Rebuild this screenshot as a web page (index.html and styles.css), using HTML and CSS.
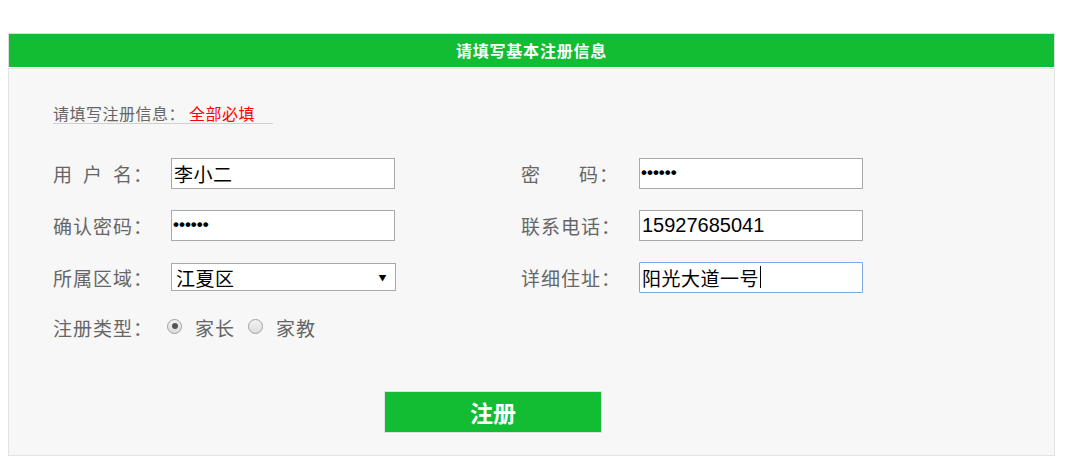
FILE: index.html
```html
<!DOCTYPE html>
<html lang="zh">
<head>
<meta charset="utf-8">
<title>注册</title>
<link rel="stylesheet" href="styles.css">
</head>
<body>
<div class="wrap">
  <div class="head">请填写基本注册信息</div>
  <div class="panel">
    <div class="title"><span class="t-gray">请填写注册信息<span class="colon">：</span></span><span class="t-red">全部必填</span></div>
    <div class="grid">
      <div class="field">
        <span class="label"><span class="wide">用</span><span class="wide">户</span>名<span class="colon">：</span></span>
        <div class="inp">李小二</div>
      </div>
      <div class="field">
        <span class="label"><span class="wider">密</span>码<span class="colon">：</span></span>
        <div class="inp dots">••••••</div>
      </div>
      <div class="field">
        <span class="label">确认密码<span class="colon">：</span></span>
        <div class="inp dots">••••••</div>
      </div>
      <div class="field">
        <span class="label">联系电话<span class="colon">：</span></span>
        <div class="inp num">15927685041</div>
      </div>
      <div class="field">
        <span class="label">所属区域<span class="colon">：</span></span>
        <div class="sel"><span>江夏区</span><span class="arrow">▼</span></div>
      </div>
      <div class="field">
        <span class="label">详细住址<span class="colon">：</span></span>
        <div class="inp focus">阳光大道一号<span class="caret"></span></div>
      </div>
      <div class="field radios">
        <span class="label">注册类型<span class="colon">：</span></span>
        <span class="radio on"></span><span class="rtext">家长</span>
        <span class="radio"></span><span class="rtext">家教</span>
      </div>
    </div>
    <div class="btnrow"><button class="btn">注册</button></div>
  </div>
</div>
</body>
</html>
```
FILE: styles.css
```css
html, body { margin: 0; padding: 0; background: #fff; }
body { font-family: "Noto Sans CJK SC", "Liberation Sans", sans-serif; }
.wrap { padding: 33px 0 0 8px; width: 1047px; }
.head {
  height: 33px;
  border: 1px solid #dcdcdc;
  border-bottom: none;
  background: #12bc33;
  color: #fff;
  font-size: 16px;
  font-weight: bold;
  letter-spacing: 0.8px;
  line-height: 32px;
  text-align: center;
}
.panel {
  margin-top: 1px;
  border: 1px solid #e3e3e3;
  background: #f7f7f7;
  height: 388px;
  padding: 0 0 0 44px;
  box-sizing: border-box;
}
.colon { font-family: "Noto Sans CJK TC", sans-serif; }
.title {
  display: inline-block;
  width: 220px;
  margin-top: 34px;
  border-bottom: 1px solid #d0d0d0;
  font-size: 16px;
  letter-spacing: 0.5px;
  line-height: 20px;
  white-space: nowrap;
}
.t-gray { color: #666; }
.t-red { color: #f00; margin-left: 4px; }
.grid {
  display: grid;
  grid-template-columns: 468px 400px;
  grid-auto-rows: 52px;
  margin-top: 32px;
}
.field { display: flex; align-items: center; height: 32px; }
.radios { margin-top: -2px; }
.label { width: 118px; font-size: 19px; letter-spacing: 1px; color: #666; white-space: nowrap; }
.wide { letter-spacing: 11px; }
.wider { letter-spacing: 39px; }
.inp {
  box-sizing: border-box;
  width: 224px;
  height: 31px;
  border: 1px solid #a9a9a9;
  background: #fff;
  padding: 0 2px;
  font-size: 19px;
  letter-spacing: 0.5px;
  color: #000;
  display: flex;
  align-items: center;
  white-space: nowrap;
}
.dots { font-family: "Liberation Sans", sans-serif; font-weight: bold; font-size: 17px; letter-spacing: 0; padding-left: 1px; }
.num { font-family: "Liberation Sans", sans-serif; font-size: 20px; letter-spacing: 0; }
.focus { border: 1px solid #7ea6e0; border-radius: 1px; }
.caret { display: inline-block; width: 1px; height: 22px; background: #000; margin-left: 1px; }
.sel {
  box-sizing: border-box;
  width: 225px;
  height: 28px;
  border: 1px solid #a9a9a9;
  background: #fff;
  display: flex;
  align-items: center;
  justify-content: space-between;
  padding: 0 8px 0 4px;
  font-size: 19px;
  letter-spacing: 0.5px;
  color: #000;
}
.arrow { font-size: 8px; }
.radio {
  box-sizing: border-box;
  width: 15px; height: 15px;
  border: 1px solid #a0a0a0;
  border-radius: 50%;
  background: linear-gradient(#f4f4f4, #dcdcdc);
  margin-left: -4px;
  margin-right: 13px;
  position: relative;
  top: -1px;
}
.radio.on::after {
  content: "";
  position: absolute;
  left: 3.5px; top: 3.5px;
  width: 6px; height: 6px;
  border-radius: 50%;
  background: #555;
}
.rtext { font-size: 19px; letter-spacing: 1px; color: #666; margin-right: 17px; }
.btnrow { padding-left: 331px; margin-top: 26px; }
.btn {
  width: 218px;
  height: 42px;
  border: 1px solid #e0e0e0;
  background: #12bc33;
  color: #fff;
  font-family: "Noto Sans CJK SC", serif;
  font-size: 23px;
  font-weight: bold;
  padding: 0;
}
```
